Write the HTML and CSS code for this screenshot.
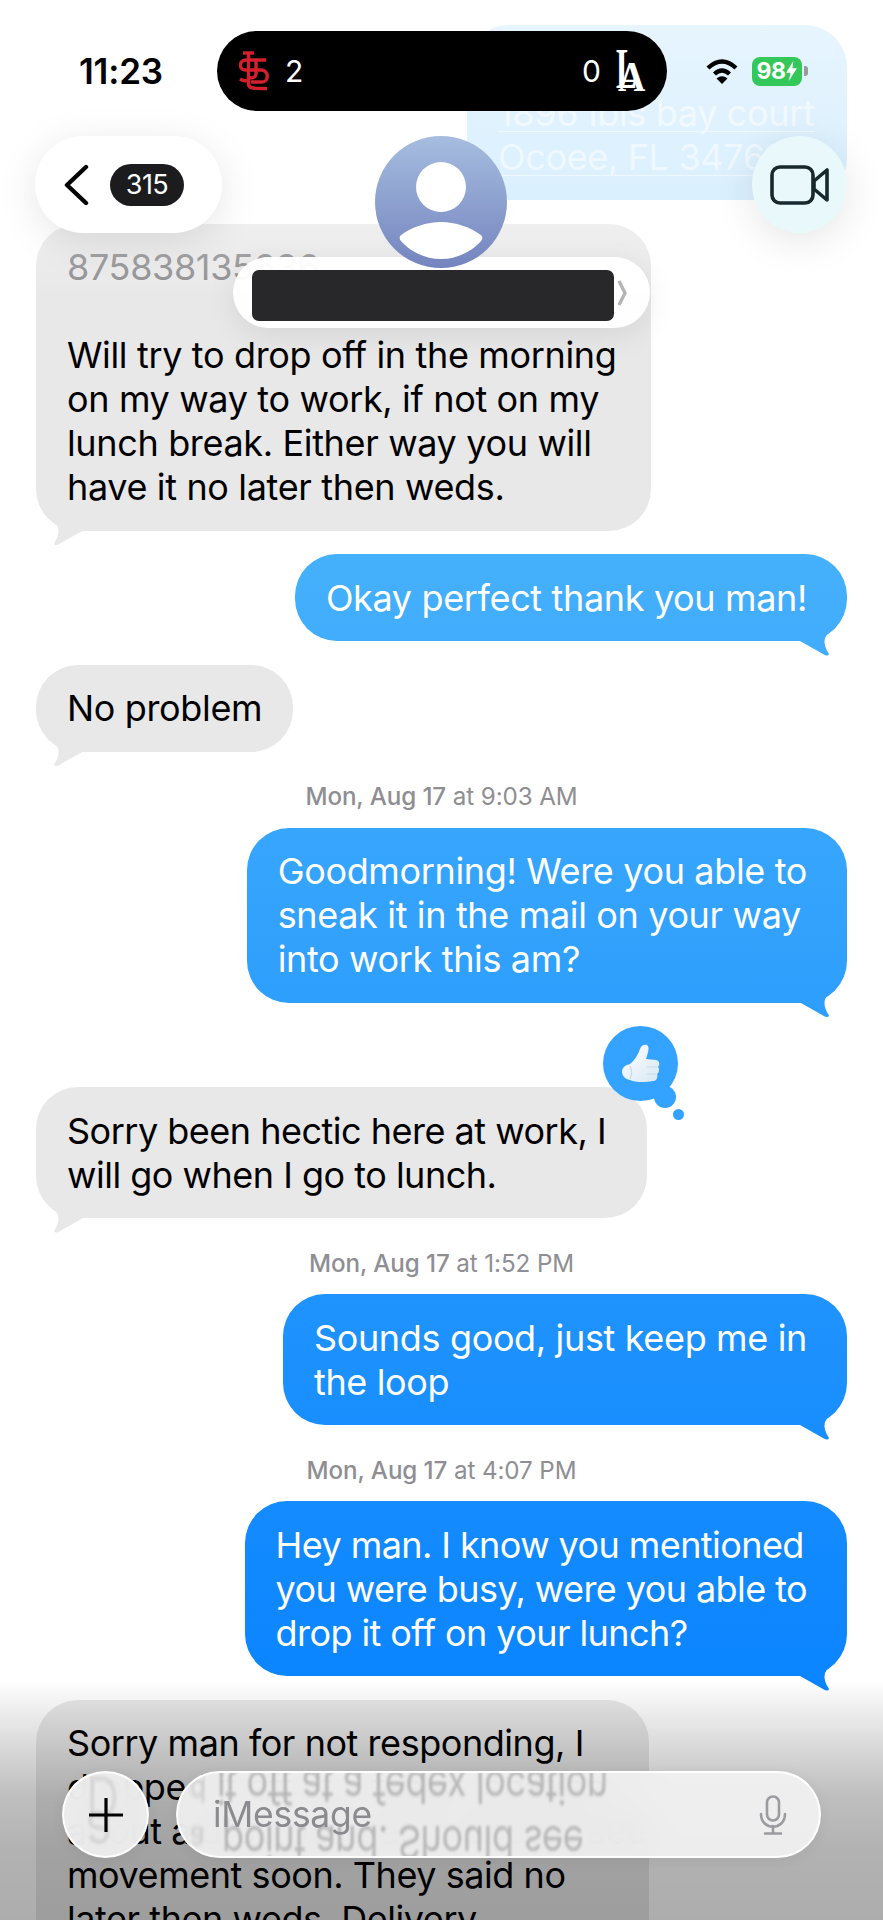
FILE: index.html
```html
<!doctype html>
<html>

<head>
    <title>Messages</title>
    <link rel="stylesheet" href="styles.css">
</head>

<body>
    <div class="screen">
        <div class="thread">
            <div class="msg out pale">
                <div class="bubble">&nbsp;<br><u>1896 Ibis bay court</u><br><u>Ocoee, FL 34761</u></div>
            </div>
            <div class="msg in top-msg">
                <div class="bubble"><span class="num">875838135636</span><br><br>Will try to drop off in the morning<br>on my way to work, if not on my<br>lunch break. Either way you will<br>have it no later then weds.</div>
            </div>
            <div class="msg out">
                <div class="bubble">Okay perfect thank you man!</div>
            </div>
            <div class="msg in">
                <div class="bubble">No problem</div>
            </div>
            <div class="stamp"><b>Mon, Aug 17</b> at 9:03 AM</div>
            <div class="msg out">
                <div class="bubble">Goodmorning! Were you able to<br>sneak it in the mail on your way<br>into work this am?</div>
            </div>
            <div class="msg in reacted">
                <div class="bubble">
                    Sorry been hectic here at work, I<br>will go when I go to lunch.
                    <div class="tapback">
                        <span class="dot-big"></span>
                        <span class="dot-small"></span>
                        <svg class="thumb" viewBox="0 0 38 40">
                            <defs>
                                <linearGradient id="hand" x1="0" y1="0" x2="1" y2="1">
                                    <stop offset="0" stop-color="#ffffff" />
                                    <stop offset="1" stop-color="#d8e8f4" />
                                </linearGradient>
                            </defs>
                            <path fill="url(#hand)" d="M0 27 C1 22 5 21 8 20 C12 17 16 11 18 5 C19 1 23 0 25 1 C28 3 26 9 24 15 L34 16 C38 17 38 21 36 23 C38 25 37 29 35 30 C36 33 35 36 32 37 C26 38 14 39 8 36 C3 35 0 32 0 27 Z" />
                            <path fill="none" stroke="#c6dbea" stroke-width="1.2" d="M25 23 H35 M25 30 H34 M8 22 C10 26 10 31 8 35" />
                        </svg>
                    </div>
                </div>
            </div>
            <div class="stamp"><b>Mon, Aug 17</b> at 1:52 PM</div>
            <div class="msg out">
                <div class="bubble">Sounds good, just keep me in<br>the loop</div>
            </div>
            <div class="stamp"><b>Mon, Aug 17</b> at 4:07 PM</div>
            <div class="msg out hey">
                <div class="bubble">Hey man. I know you mentioned<br>you were busy, were you able to<br>drop it off on your lunch?</div>
            </div>
            <div class="msg in last-msg">
                <div class="bubble">Sorry man for not responding, I<br>dropped it off at a fedex location<br>about a drop point and. Should see<br>movement soon. They said no<br>later then weds. Delivery</div>
            </div>
        </div>

        <div class="fade-top"></div>
        <div class="fade-bottom"></div>

        <div class="status">
            <div class="time">11:23</div>
            <div class="island">
                <div class="team">
                    <svg class="logo-stl" viewBox="0 0 31 40" fill="none" stroke="#d3202c" stroke-width="3.4">
                        <path d="M4 2 H15" />
                        <path d="M27 9 H7 C0 9 -1 18 6 19 H23 C30 20 30 31 23 31 H12" />
                        <path d="M9.5 2 V33 C9.5 37 12 37.500 28 37.500" />
                        <path d="M1 28 C4 30 7 30 9 29" />
                        <path d="M17 9 V22 C17 26 15 27 11 27" />
                    </svg>
                    <span>2</span>
                </div>
                <div class="team">
                    <span>0</span>
                    <svg class="logo-la" viewBox="0 0 30 42">
                        <text class="la-l" transform="translate(0 38) scale(.55 1)">L</text>
                        <text class="la-a" transform="translate(2 41) scale(.9 1)">A</text>
                    </svg>
                </div>
            </div>
            <div class="sys">
                <svg class="wifi" viewBox="0 0 34 26" fill="none" stroke="#000" stroke-width="4.4">
                    <path d="M3 10 Q17 -3 31 10" />
                    <path d="M9.5 16 Q17 9 24.5 16" />
                    <path d="M17 26 L11.5 20.5 Q17 16 22.5 20.5 Z" fill="#000" stroke="none" />
                </svg>
                <div class="battery">98<svg class="bolt" viewBox="0 0 12 22"><path fill="#fff" d="M8 0 L0 13 H5 L3 22 L12 8 H7 Z" /></svg></div>
                <span class="nub"></span>
            </div>
        </div>

        <div class="nav">
            <div class="back">
                <svg class="chev" viewBox="0 0 26 42" fill="none" stroke="#000" stroke-width="4.4" stroke-linecap="round" stroke-linejoin="round">
                    <path d="M23 3 L4 21 L23 39" />
                </svg>
                <span class="count">315</span>
            </div>
            <div class="contact">
                <div class="avatar">
                    <span class="head"></span>
                    <span class="shoulders"></span>
                </div>
                <div class="name">
                    <div class="redact"></div>
                    <svg class="name-chev" viewBox="0 0 10 28" fill="none" stroke="#b4b4b4" stroke-width="3.4">
                        <path d="M2 2 L8 14 L2 26" />
                    </svg>
                </div>
            </div>
            <div class="video">
                <svg class="cam" viewBox="0 0 60 40" fill="none" stroke="#17282f" stroke-width="3.6" stroke-linejoin="round">
                    <rect x="2" y="2" width="41" height="36" rx="8" />
                    <path d="M44 16 L57 5 V35 L44 24 Z" />
                </svg>
            </div>
        </div>

        <div class="composer">
            <div class="plus">
                <span class="ghost ghost-plus">D</span>
                <span class="ghost ghost-plus2">a</span>
                <svg class="plus-icon" viewBox="0 0 36 36" stroke="#000" stroke-width="3.2">
                    <path d="M18 1 V35 M1 18 H35" />
                </svg>
            </div>
            <div class="input">
                <span class="ghost ghost-c">d</span>
                <span class="ghost ghost-d">a</span>
                <span class="ghost ghost-a">it off at a fedex location</span>
                <span class="ghost ghost-b">point and. Should see</span>
                <span class="placeholder">iMessage</span>
                <svg class="mic" viewBox="0 0 28 40" fill="none" stroke="#9b9ba0" stroke-width="2.6" stroke-linecap="round">
                    <rect x="8" y="1.5" width="12" height="24" rx="6" />
                    <path d="M2 19 C2 36 26 36 26 19" />
                    <path d="M14 31 V38 M6 38.5 H22" />
                </svg>
            </div>
        </div>
    </div>
</body>

</html>
```

FILE: styles.css
```css
html,
body {
    margin: 0;
    padding: 0;
    background: #fff;
}

* {
    box-sizing: border-box;
}

.screen {
    position: relative;
    width: 883px;
    height: 1920px;
    overflow: hidden;
    background: #fff;
    font-family: Inter, "Liberation Sans", sans-serif;
}

.thread {
    display: flex;
    flex-direction: column;
    padding: 25px 36px 0;
}

.msg {
    display: flex;
    margin-bottom: 23.5px;
}

.msg.out {
    justify-content: flex-end;
}

.msg.reacted {
    margin-top: 61px;
}

.bubble {
    position: relative;
    padding: 21.5px 31px;
    border-radius: 42px;
    font-size: 36px;
    line-height: 44px;
    letter-spacing: -0.35px;
    white-space: nowrap;
}

.bubble::after {
    content: '';
    position: absolute;
    bottom: -16px;
    width: 52px;
    height: 46px;
    background: inherit;
    clip-path: path('M5 30 L28 43 Q33 46 34 43 Q28 34 30 27 Q33 20 47 7 L20 0 Z');
}

.out .bubble {
    padding-right: 40px;
    color: #fff;
    background: linear-gradient(#48b2fb 0, #48b2fb 500px, #0a84ff 1700px) fixed;
}

.out .bubble::after {
    right: 0;
}

.in .bubble {
    color: #000;
    background: #e8e8e8;
}

.in .bubble::after {
    left: 0;
    transform: scaleX(-1);
}

.pale .bubble {
    width: 380px;
    color: rgba(255, 255, 255, .55);
}

.pale .bubble::after {
    display: none;
}

.pale u {
    text-decoration-thickness: 1px;
    text-underline-offset: 5px;
}

.top-msg .bubble {
    width: 615px;
}

.reacted .bubble {
    width: 611px;
    letter-spacing: -0.5px;
}

.hey .bubble {
    letter-spacing: -0.58px;
}

.last-msg .bubble {
    width: 613px;
    letter-spacing: -0.45px;
}

.num {
    color: #8c8c8e;
}

.stamp {
    padding-top: 8px;
    height: 52.5px;
    line-height: 28px;
    text-align: center;
    font-size: 24.2px;
    letter-spacing: -0.1px;
    color: #8e8e93;
}

.stamp b {
    font-weight: 500;
}

.tapback {
    position: absolute;
    top: -61px;
    right: -31px;
    width: 75px;
    height: 75px;
    border-radius: 50%;
    background: #33a3ff;
    display: flex;
    align-items: center;
    justify-content: center;
}

.dot-big {
    position: absolute;
    left: 51px;
    top: 60px;
    width: 22px;
    height: 22px;
    border-radius: 50%;
    background: #33a3ff;
}

.dot-small {
    position: absolute;
    left: 70px;
    top: 83px;
    width: 11px;
    height: 11px;
    border-radius: 50%;
    background: #33a3ff;
}

.thumb {
    width: 38px;
    height: 40px;
}

.fade-top {
    position: absolute;
    left: 0;
    top: 0;
    width: 100%;
    height: 320px;
    background: linear-gradient(rgba(255, 255, 255, .88), rgba(255, 255, 255, .8) 200px, rgba(255, 255, 255, .3) 225px, rgba(255, 255, 255, 0) 300px);
}

.fade-bottom {
    position: absolute;
    left: 0;
    bottom: 0;
    width: 100%;
    height: 240px;
    background: linear-gradient(rgba(0, 0, 0, 0), rgba(0, 0, 0, .1) 45px, rgba(0, 0, 0, .25) 115px, rgba(0, 0, 0, .3) 170px, rgba(0, 0, 0, .32));
}

.status {
    position: absolute;
    left: 0;
    top: 31px;
    width: 100%;
    height: 80px;
    display: grid;
    grid-template-columns: 217px 450px 1fr;
    align-items: center;
}

.time {
    padding-left: 79px;
    font-size: 35px;
    font-weight: 600;
    letter-spacing: -0.2px;
    color: #000;
}

.island {
    height: 80px;
    border-radius: 40px;
    background: #000;
    color: #fff;
    padding: 0 21px 0 22px;
    display: flex;
    align-items: center;
    justify-content: space-between;
    font-size: 30px;
}

.team {
    display: flex;
    align-items: center;
    gap: 15px;
}

.logo-stl {
    width: 31px;
    height: 40px;
}

.logo-la {
    width: 30px;
    height: 42px;
}

.logo-la text {
    fill: #fff;
    font-family: "Liberation Serif", serif;
    font-weight: 700;
}

.la-l {
    font-size: 57px;
}

.la-a {
    font-size: 42px;
}

.sys {
    display: flex;
    align-items: center;
    padding-left: 38px;
}

.wifi {
    width: 34px;
    height: 26px;
    margin-right: 13px;
}

.battery {
    width: 50px;
    height: 29px;
    border-radius: 8px;
    background: #34c759;
    color: #fff;
    font-size: 23px;
    font-weight: 700;
    letter-spacing: -0.5px;
    display: flex;
    align-items: center;
    justify-content: center;
    gap: 1px;
}

.bolt {
    width: 11px;
    height: 20px;
}

.nub {
    width: 4px;
    height: 10px;
    margin-left: 2px;
    border-radius: 0 3px 3px 0;
    background: #9a9a9a;
}

.nav {
    position: absolute;
    left: 0;
    top: 136px;
    width: 100%;
    padding: 0 36px 0 35px;
    display: grid;
    grid-template-columns: 1fr auto 1fr;
    align-items: start;
}

.back {
    justify-self: start;
    width: 187px;
    height: 97px;
    border-radius: 48px;
    background: #fff;
    box-shadow: 0 8px 40px rgba(0, 0, 0, .1);
    display: flex;
    align-items: center;
    padding-left: 28px;
    gap: 21px;
}

.chev {
    width: 26px;
    height: 42px;
}

.count {
    width: 74px;
    height: 42px;
    border-radius: 21px;
    background: #1c1c1e;
    color: #fff;
    font-size: 27px;
    letter-spacing: -0.5px;
    display: flex;
    align-items: center;
    justify-content: center;
}

.contact {
    display: flex;
    flex-direction: column;
    align-items: center;
}

.avatar {
    position: relative;
    z-index: 1;
    width: 132px;
    height: 132px;
    border-radius: 50%;
    overflow: hidden;
    background: linear-gradient(#a6bddf, #7484bf);
}

.head {
    position: absolute;
    left: 41px;
    top: 26px;
    width: 50px;
    height: 50px;
    border-radius: 50%;
    background: #fff;
}

.shoulders {
    position: absolute;
    left: 24px;
    top: 86px;
    width: 84px;
    height: 37px;
    background: #fff;
    clip-path: path('M1 14 C12 5 28 0 42 0 C56 0 72 5 83 14 Q84 17 82 19 C74 28 60 37 42 37 C24 37 10 28 2 19 Q0 17 1 14 Z');
}

.name {
    width: 417px;
    height: 71px;
    margin-top: -11px;
    border-radius: 36px;
    background: rgba(255, 255, 255, .96);
    box-shadow: 0 8px 30px rgba(0, 0, 0, .08);
    display: flex;
    align-items: center;
    padding: 6px 0 0 19px;
    gap: 3px;
}

.redact {
    width: 362px;
    height: 51px;
    border-radius: 7px;
    background: #28282a;
}

.name-chev {
    width: 10px;
    height: 28px;
    margin-top: -5px;
}

.video {
    justify-self: end;
    width: 95px;
    height: 97px;
    border-radius: 50%;
    background: #e9f9fb;
    box-shadow: 0 8px 40px rgba(0, 0, 0, .1);
    display: flex;
    align-items: center;
    justify-content: center;
}

.cam {
    width: 60px;
    height: 40px;
}

.composer {
    position: absolute;
    left: 62px;
    top: 1771px;
    display: flex;
    gap: 27px;
}

.plus,
.input {
    position: relative;
    height: 87px;
    overflow: hidden;
    border-radius: 44px;
    border: 2px solid rgba(255, 255, 255, .9);
    background: rgba(242, 242, 242, .92);
    backdrop-filter: blur(16px);
    box-shadow: 0 2px 14px rgba(0, 0, 0, .06);
}

.plus {
    width: 87px;
    display: flex;
    align-items: center;
    justify-content: center;
}

.plus-icon {
    width: 36px;
    height: 36px;
}

.input {
    width: 645px;
    display: flex;
    align-items: center;
    justify-content: space-between;
    padding: 0 32px 0 35px;
}

.placeholder {
    position: relative;
    font-size: 35.5px;
    letter-spacing: -0.3px;
    color: #8b8b8f;
}

.mic {
    width: 28px;
    height: 40px;
}

.ghost {
    position: absolute;
    white-space: nowrap;
    font-size: 36px;
    letter-spacing: -0.35px;
    color: rgba(0, 0, 0, .22);
    transform: scaleY(-1.25);
    filter: blur(1.2px);
}

.ghost-a {
    left: 39px;
    top: -8px;
}

.ghost-b {
    left: 44px;
    top: 47px;
}

.ghost-c,
.ghost-d {
    left: 12px;
    font-size: 26px;
    color: rgba(0, 0, 0, .14);
    filter: blur(1.5px);
}

.ghost-c {
    top: 2px;
}

.ghost-d {
    top: 50px;
}

.ghost-plus {
    left: 22px;
    top: -4px;
    font-size: 46px;
    color: rgba(0, 0, 0, .08);
}

.ghost-plus2 {
    left: 22px;
    top: 30px;
    font-size: 48px;
    color: rgba(0, 0, 0, .08);
}
```
